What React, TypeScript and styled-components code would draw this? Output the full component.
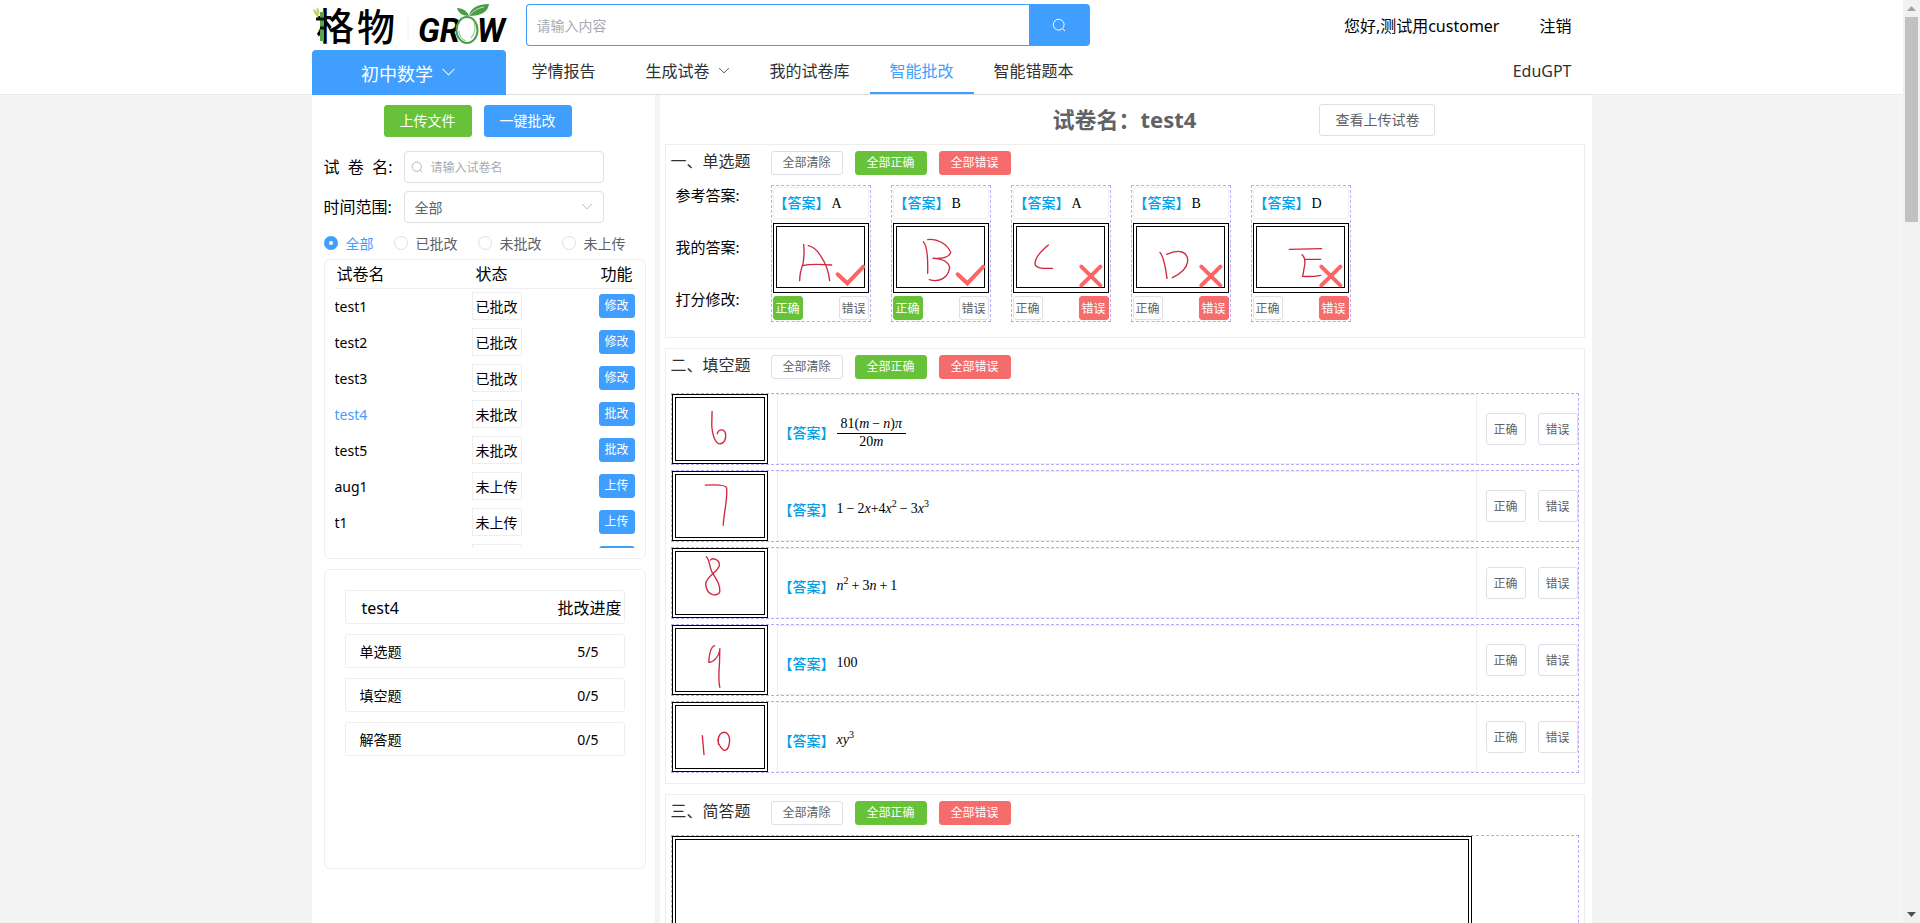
import React from "react";
import styled, { createGlobalStyle, css } from "styled-components";

const blue = "#409eff";
const green = "#67c23a";
const red = "#f56c6c";
const line = "#dcdfe6";
const soft = "#eeeeee";
const textGrey = "#606266";

const GlobalStyle = createGlobalStyle`
  *, *::before, *::after { box-sizing: border-box; }
  html, body { margin: 0; background: #f4f4f4; }
  body, button, input, select {
    font-family: "Noto Sans", "Noto Sans CJK SC", sans-serif;
  }
  body { font-size: 14px; line-height: 20px; color: #000; overflow: hidden; }
  button { cursor: pointer; }
`;

/* ---------- page frame ---------- */
const Screen = styled.div`
  display: flex;
  height: 100vh;
  overflow: hidden;
`;
const Page = styled.div`
  flex: 1;
  min-width: 0;
  height: 100%;
  overflow: hidden;
  display: flex;
  flex-direction: column;
`;
const Rail = styled.div`
  width: 17px;
  background: #f1f1f1;
  display: flex;
  flex-direction: column;
  align-items: center;
`;
const RailArrow = styled.svg`
  width: 17px;
  height: 17px;
  flex: none;
`;
const Thumb = styled.div`
  width: 13px;
  height: 205px;
  background: #c1c1c1;
  margin-bottom: auto;
`;
const Container = styled.div`
  width: 100%;
  max-width: 1280px;
  margin: 0 auto;
`;

/* ---------- header ---------- */
const Header = styled.header`
  flex: none;
  background: #fff;
  border-bottom: 1px solid #ebebeb;
`;
const TopRow = styled(Container)`
  display: flex;
  height: 50px;
  padding: 4px 20px 4px 0;
`;
const Logo = styled.svg`
  width: 194px;
  height: 42px;
  margin-right: 20px;
  flex: none;
  overflow: visible;
`;
const SearchForm = styled.form`
  display: flex;
  width: 564px;
  height: 42px;
`;
const SearchInput = styled.input`
  flex: 1;
  min-width: 0;
  border: 1px solid ${blue};
  border-right: 0;
  border-radius: 4px 0 0 4px;
  padding: 0 10px;
  font-size: 14px;
  outline: none;
  &::placeholder { color: #a8abb2; }
`;
const SearchButton = styled.button`
  width: 61px;
  border: 0;
  border-radius: 0 4px 4px 0;
  background: ${blue};
  color: #fff;
  display: flex;
  align-items: center;
  justify-content: center;
`;
const Account = styled.div`
  margin-left: auto;
  display: flex;
  gap: 40px;
  font-size: 16px;
  line-height: 44px;
`;
const PlainLink = styled.a`
  color: inherit;
  text-decoration: none;
`;
const NavRow = styled(Container)`
  display: flex;
  height: 45px;
  margin-bottom: -1px;
  border-bottom: 1px solid ${line};
`;
const Subject = styled.button`
  width: 194px;
  height: 45px;
  border: 0;
  border-radius: 4px 4px 0 0;
  background: ${blue};
  color: #fff;
  font-size: 18px;
  display: flex;
  align-items: center;
  justify-content: center;
  gap: 8px;
`;
const Nav = styled.nav`
  flex: 1;
  display: flex;
  padding: 0 20px 0 6px;
  font-size: 16px;
  line-height: 42px;
  color: #303133;
`;
const NavLink = styled.a<{ $active?: boolean; $wide?: boolean }>`
  display: flex;
  align-items: center;
  gap: 8px;
  height: 44px;
  padding: 0 20px;
  margin-right: ${(p) => (p.$wide ? "10px" : "0")};
  color: ${(p) => (p.$active ? blue : "inherit")};
  border-bottom: 2px solid ${(p) => (p.$active ? blue : "transparent")};
  text-decoration: none;
`;
const NavEnd = styled(PlainLink)`
  margin-left: auto;
`;

/* ---------- columns ---------- */
const Columns = styled(Container)`
  flex: 1;
  min-height: 0;
  display: flex;
  gap: 5px;
`;
const Side = styled.aside`
  width: 343px;
  flex: none;
  background: #fff;
  padding: 10px 9px 0 12px;
`;
const Main = styled.main`
  flex: 1;
  min-width: 0;
  background: #fff;
  padding: 0 7px 0 5px;
`;

/* ---------- controls ---------- */
type Tone = "plain" | "green" | "blue" | "red";
const tones = {
  plain: css`background: #fff; color: ${textGrey}; border-color: ${line};`,
  green: css`background: ${green}; color: #fff; border-color: ${green};`,
  blue: css`background: ${blue}; color: #fff; border-color: ${blue};`,
  red: css`background: ${red}; color: #fff; border-color: ${red};`,
};
const Button = styled.button<{ $tone?: Tone; $small?: boolean; $w: number }>`
  width: ${(p) => p.$w}px;
  height: ${(p) => (p.$small ? 24 : 32)}px;
  padding: 0;
  border: 1px solid;
  border-radius: 3px;
  font-size: ${(p) => (p.$small ? 12 : 14)}px;
  line-height: 20px;
  white-space: nowrap;
  ${(p) => tones[p.$tone ?? "plain"]}
`;
const MarkButton = styled(Button)`
  font-size: 12px;
  padding-top: 2px;
`;
const Actions = styled.div`
  display: flex;
  justify-content: center;
  gap: 12px;
  margin: 0 14px 14px 0;
`;
const Field = styled.div`
  display: flex;
  align-items: center;
  height: 32px;
  margin-bottom: 8px;
`;
const FieldLabel = styled.label`
  width: 80px;
  font-size: 16px;
  white-space: pre;
`;
const InputBox = styled.div`
  width: 200px;
  height: 32px;
  border: 1px solid ${line};
  border-radius: 4px;
  display: flex;
  align-items: center;
  padding: 0 10px 0 6px;
  gap: 8px;
  color: #a8abb2;
`;
const BareInput = styled.input`
  flex: 1;
  min-width: 0;
  border: 0;
  padding: 0;
  outline: none;
  font-size: 12px;
  &::placeholder { color: #a8abb2; }
`;
const BareSelect = styled.select`
  flex: 1;
  appearance: none;
  border: 0;
  background: none;
  padding: 0 0 0 4px;
  font-size: 14px;
  color: ${textGrey};
  outline: none;
`;
const Radios = styled.div`
  display: flex;
  gap: 20px;
  height: 24px;
  margin-bottom: 4px;
`;
const RadioLabel = styled.label`
  display: flex;
  align-items: center;
  gap: 8px;
  color: ${textGrey};
  &:has(input:checked) { color: ${blue}; }
`;
const RadioText = styled.span`
  padding-top: 2px;
`;
const Radio = styled.input`
  appearance: none;
  width: 14px;
  height: 14px;
  margin: 0;
  border: 1px solid ${line};
  border-radius: 50%;
  &:checked { border: 5px solid ${blue}; }
`;

/* ---------- paper list ---------- */
const Panel = styled.section`
  width: 322px;
  height: 300px;
  border: 1px solid ${soft};
  border-radius: 6px;
  margin-bottom: 10px;
`;
const ListPanel = styled(Panel)`
  padding: 0 10px 10px;
`;
const ListClip = styled.div`
  height: 288px;
  overflow: hidden;
`;
const PaperTable = styled.table`
  width: 100%;
  table-layout: fixed;
  border-collapse: collapse;
  td, th { padding: 0; }
  th {
    height: 28px;
    font-weight: 400;
    font-size: 16px;
    text-align: left;
    border-bottom: 1px solid ${soft};
    padding: 0 2px;
  }
  th:nth-child(1) { width: 137px; }
  th:nth-child(2) { width: 60px; padding-left: 4px; }
  th:last-child, td:last-child { text-align: right; }
  td { height: 36px; }
`;
const PaperName = styled.td<{ $active: boolean }>`
  && { padding-top: 2px; }
  color: ${(p) => (p.$active ? blue : "inherit")};
`;
const Status = styled.div`
  width: 50px;
  height: 28px;
  border: 1px solid ${soft};
  text-align: center;
  line-height: 28px;
`;

/* ---------- progress ---------- */
const ProgressPanel = styled(Panel)`
  padding: 20px;
  display: flex;
  flex-direction: column;
  gap: 10px;
`;
const ProgressRow = styled.div<{ $head?: boolean }>`
  height: 34px;
  border: 1px solid ${soft};
  border-radius: 3px;
  display: flex;
  align-items: center;
  justify-content: space-between;
  padding: ${(p) => (p.$head ? "2px 2px 0 16px" : "2px 25px 0 14px")};
  font-size: ${(p) => (p.$head ? 16 : 14)}px;
`;

/* ---------- grading ---------- */
const TitleBar = styled.div`
  display: grid;
  grid-template-columns: 1fr auto 1fr;
  align-items: center;
  height: 49px;
  padding-top: 1px;
`;
const Title = styled.h1`
  grid-column: 2;
  margin: 0;
  font-size: 22px;
  line-height: 30px;
  padding-bottom: 2px;
  font-weight: 700;
  color: ${textGrey};
`;
const TitleAction = styled.div`
  padding-left: 123px;
`;
const Section = styled.section<{ $pad?: number }>`
  border: 1px solid ${soft};
  padding: 0 5px ${(p) => p.$pad ?? 10}px;
  margin-bottom: 10px;
`;
const SectionHead = styled.div<{ $h: number }>`
  display: flex;
  align-items: flex-start;
  gap: 12px;
  height: ${(p) => p.$h}px;
  padding-top: 6px;
`;
const SectionTitle = styled.h2`
  width: 88px;
  margin: 0;
  font-size: 16px;
  line-height: 20px;
  font-weight: 400;
  color: #303133;
  white-space: nowrap;
`;
const ChoiceGrid = styled.div`
  display: flex;
`;
const ChoiceLabels = styled.div`
  width: 100px;
  padding-left: 5px;
  font-size: 15px;
  line-height: 20px;
  display: flex;
  flex-direction: column;
  gap: 32px;
`;
const Cards = styled.div`
  display: flex;
  gap: 20px;
`;
const Card = styled.div`
  width: 100px;
  height: 137px;
  border: 1px dashed #bba8fb;
  padding: 1px;
  display: flex;
  flex-direction: column;
`;
const CardAnswer = styled.div`
  height: 32px;
  border: 1px solid ${soft};
  border-radius: 4px;
  margin-bottom: 4px;
  line-height: 28px;
  white-space: nowrap;
`;
const CardButtons = styled.div`
  display: flex;
  justify-content: space-between;
  margin-top: 3px;
`;
const Tag = styled.span`
  color: #00a0e9;
  font-weight: 500;
  margin-right: 2px;
  font-family: "Noto Sans CJK SC", sans-serif;
`;
const Formula = styled.span`
  font-family: "Liberation Serif", serif;
  font-size: 14px;
  white-space: nowrap;
  sup {
    font-size: 10px;
    line-height: 0;
    vertical-align: 6px;
  }
`;
const Op = styled.span`
  margin: 0 3px;
`;
const Fraction = styled.span`
  display: inline-flex;
  flex-direction: column;
  align-items: center;
  line-height: 16px;
`;
const Numerator = styled.span`
  border-bottom: 1px solid #000;
  padding: 0 4px 1px;
`;
const Ink = styled.div<{ $choice?: boolean; $w?: number; $h?: number }>`
  width: ${(p) => p.$w ?? 96}px;
  height: ${(p) => p.$h ?? 70}px;
  flex: none;
  border: 1px solid #000;
  padding: ${(p) => (p.$choice ? "2px 3px 4px 2px" : "2px")};
`;
const InkInner = styled.div`
  height: 100%;
  border: 1px solid #000;
`;
const Drawing = styled.svg`
  display: block;
  width: 100%;
  height: 100%;
  overflow: visible;
`;
const Blank = styled.div`
  height: 72px;
  border: 1px dashed #bba8fb;
  margin-bottom: 5px;
  display: flex;
  align-items: center;
  gap: 9px;
  &:last-child { margin-bottom: 0; }
`;
const BlankAnswer = styled.div`
  flex: 1;
  height: 70px;
  border: 1px solid ${soft};
  padding: 6px 0 0 1px;
  display: flex;
  align-items: center;
`;
const BlankButtons = styled.div`
  display: flex;
  gap: 12px;
`;
const LongAnswer = styled.div`
  border: 1px dashed #bba8fb;
`;

const Chevron = ({ w, color }: { w: number; color: string }) => (
  <svg width={w} height={w} viewBox="0 0 16 16" fill="none" stroke={color} strokeWidth="1.1" aria-hidden="true">
    <path d="M1.5 4 8 10.500l6.5-6.5" />
  </svg>
);
const Magnifier = ({ size }: { size: number }) => (
  <svg width={size} height={size} viewBox="0 0 14 14" fill="none" stroke="currentColor" strokeWidth="1" aria-hidden="true">
    <circle cx="6.7" cy="6.7" r="5.4" />
    <path d="M10.8 10.8 13 13" />
  </svg>
);

const Brand = () => (
  <Logo viewBox="0 0 194 42" role="img" aria-label="格物 GROW">
    <text x="4" y="36" fontSize="38" fontWeight="500" fontFamily="Noto Sans CJK SC, sans-serif">格</text>
    <text x="45" y="37" fontSize="38" fontWeight="500" fontFamily="Noto Sans CJK SC, sans-serif">物</text>
    <path d="M8 8h4v29H8z" fill="#57a44b" />
    <path d="M4 15h11M8 24h5" stroke="#111" strokeWidth="3" />
    <path d="M1 5c3 1 5 4 6 8-3-1-5-4-6-8zM7 11c-2-3-3-5-2-8 2 2 3 5 2 8z" fill="#b5cf55" />
    <path d="M96 14v22" stroke="#eeeeee" />
    <g fontFamily="Roboto, sans-serif" fontSize="33" fontWeight="700" fontStyle="italic">
      <text x="106" y="38">GR</text>
      <text x="165" y="38">W</text>
    </g>
    <ellipse cx="155" cy="26" rx="10.500" ry="13" fill="#fff" stroke="#4a9d47" strokeWidth="2" />
    <path d="M147 27c0 5 3 9 7 10M162 18c2 5 1 12-3 16" fill="none" stroke="#9ccf8f" strokeWidth="1.200" />
    <path d="M157 12c1-7 7-12 20-12-1 8-8 12-20 12z" fill="#4a9d47" />
    <path d="M157 12c-1-4-6-8-12-8 1 5 6 8 12 8z" fill="#4a9d47" />
    <path d="M157 12c4-5 9-8 15-9" fill="none" stroke="#c6e3bf" strokeWidth="1" />
  </Logo>
);

const papers = [
  ["test1", "已批改", "修改"],
  ["test2", "已批改", "修改"],
  ["test3", "已批改", "修改"],
  ["test4", "未批改", "批改"],
  ["test5", "未批改", "批改"],
  ["aug1", "未上传", "上传"],
  ["t1", "未上传", "上传"],
  ["t2", "未上传", "上传"],
];

const choices = [
  { answer: "A", right: true, ink: "M80 52Q83 80 78 110Q68 138 68 161M94 56Q114 60 130 85Q154 120 158 161M78 116Q100 109 164 114" },
  { answer: "B", right: true, ink: "M79 44Q94 60 92 139M92 38C120 34 150 50 161 76C156 92 135 96 108 94C140 94 156 108 158 122C154 150 130 168 97 158" },
  { answer: "A", right: false, ink: "M94 54C70 74 54 94 54 110C56 126 80 124 107 124" },
  { answer: "B", right: false, ink: "M69 76Q82 92 90 154M89 82C125 66 154 72 152 104C148 128 128 142 106 152" },
  { answer: "D", right: false, ink: "M97 67L194 65M135 83Q146 92 143 114L137 148Q165 150 191 145M143 97L191 97" },
];

const blanks: { ink: string; answer: React.ReactNode }[] = [
  {
    ink: "M107 40L106 80C108 118 120 136 130 136C144 136 149 120 147 106C144 92 128 90 122 106",
    answer: (
      <Fraction>
        <Numerator>81(<i>m</i><Op>−</Op><i>n</i>)<i>π</i></Numerator>
        <span>20<i>m</i></span>
      </Fraction>
    ),
  },
  {
    ink: "M87 30C120 28 148 28 150 38C154 70 142 110 140 149",
    answer: <>1<Op>−</Op>2<i>x</i>+4<i>x</i><sup>2</sup><Op>−</Op>3<i>x</i><sup>3</sup></>,
  },
  {
    ink: "M90 14C100 22 100 50 108 62C122 84 132 100 130 118C126 132 92 134 88 96C88 72 126 60 129 38C128 22 108 16 102 24",
    answer: <><i>n</i><sup>2</sup><Op>+</Op>3<i>n</i><Op>+</Op>1</>,
  },
  {
    ink: "M114 49C100 54 98 80 97 98C110 102 128 78 129 66M130 58L129 100C126 140 126 160 130 173",
    answer: <>100</>,
  },
  {
    ink: "M78 88L83 144M126 114C124 98 128 84 136 80C152 72 162 90 158 112C154 132 146 134 140 130C130 122 124 108 124 100",
    answer: <><i>xy</i><sup>3</sup></>,
  },
];

const Handwriting = ({ d, mark }: { d: string; mark?: "check" | "cross" }) => (
  <Drawing viewBox="0 0 261 180" preserveAspectRatio="xMinYMin" fill="none" strokeLinecap="round" strokeLinejoin="round" aria-hidden="true">
    <path d={d} stroke="#d0263f" strokeWidth="4" />
    {mark === "check" && <path d="M182 142 211 169 259 119" stroke="#ff6464" strokeWidth="12" strokeLinejoin="miter" />}
    {mark === "cross" && <path d="M193 119 250 175M250 119 193 175" stroke="#ff6464" strokeWidth="12" />}
  </Drawing>
);

const Head = ({ title, h }: { title: string; h: number }) => (
  <SectionHead $h={h}>
    <SectionTitle>{title}</SectionTitle>
    <Button $small $w={72}>全部清除</Button>
    <Button $small $w={72} $tone="green">全部正确</Button>
    <Button $small $w={72} $tone="red">全部错误</Button>
  </SectionHead>
);

export default function App() {
  return (
    <Screen>
      <GlobalStyle />
      <Page>
        <Header>
          <TopRow>
            <Brand />
            <SearchForm onSubmit={(e) => e.preventDefault()}>
              <SearchInput aria-label="搜索" placeholder="请输入内容" />
              <SearchButton aria-label="搜索"><Magnifier size={14} /></SearchButton>
            </SearchForm>
            <Account>
              <span>您好,测试用customer</span>
              <PlainLink href="#logout">注销</PlainLink>
            </Account>
          </TopRow>
          <NavRow>
            <Subject>初中数学<Chevron w={15} color="#fff" /></Subject>
            <Nav>
              <NavLink href="#report" $wide>学情报告</NavLink>
              <NavLink href="#create">生成试卷<Chevron w={12} color="#303133" /></NavLink>
              <NavLink href="#library">我的试卷库</NavLink>
              <NavLink href="#grading" $active>智能批改</NavLink>
              <NavLink href="#mistakes">智能错题本</NavLink>
              <NavEnd href="#edugpt">EduGPT</NavEnd>
            </Nav>
          </NavRow>
        </Header>

        <Columns>
          <Side>
            <Actions>
              <Button $w={88} $tone="green">上传文件</Button>
              <Button $w={88} $tone="blue">一键批改</Button>
            </Actions>
            <Field>
              <FieldLabel htmlFor="paper">{"试  卷  名:"}</FieldLabel>
              <InputBox>
                <Magnifier size={12} />
                <BareInput id="paper" placeholder="请输入试卷名" />
              </InputBox>
            </Field>
            <Field>
              <FieldLabel htmlFor="range">时间范围:</FieldLabel>
              <InputBox>
                <BareSelect id="range"><option>全部</option></BareSelect>
                <Chevron w={12} color="#a8abb2" />
              </InputBox>
            </Field>
            <Radios>
              {["全部", "已批改", "未批改", "未上传"].map((t, i) => (
                <RadioLabel key={t}>
                  <Radio type="radio" name="state" defaultChecked={i === 0} />
                  <RadioText>{t}</RadioText>
                </RadioLabel>
              ))}
            </Radios>
            <ListPanel>
              <ListClip>
                <PaperTable>
                  <thead>
                    <tr><th>试卷名</th><th>状态</th><th>功能</th></tr>
                  </thead>
                  <tbody>
                    {papers.map(([name, status, action]) => (
                      <tr key={name}>
                        <PaperName $active={name === "test4"}>{name}</PaperName>
                        <td><Status>{status}</Status></td>
                        <td><Button $small $w={36} $tone="blue">{action}</Button></td>
                      </tr>
                    ))}
                  </tbody>
                </PaperTable>
              </ListClip>
            </ListPanel>
            <ProgressPanel>
              <ProgressRow $head><span>test4</span><span>批改进度</span></ProgressRow>
              <ProgressRow><span>单选题</span><span>5/5</span></ProgressRow>
              <ProgressRow><span>填空题</span><span>0/5</span></ProgressRow>
              <ProgressRow><span>解答题</span><span>0/5</span></ProgressRow>
            </ProgressPanel>
          </Side>

          <Main>
            <TitleBar>
              <Title>试卷名：test4</Title>
              <TitleAction><Button $w={116}>查看上传试卷</Button></TitleAction>
            </TitleBar>

            <Section $pad={15}>
              <Head title="一、单选题" h={40} />
              <ChoiceGrid>
                <ChoiceLabels>
                  <span>参考答案:</span>
                  <span>我的答案:</span>
                  <span>打分修改:</span>
                </ChoiceLabels>
                <Cards>
                  {choices.map((c, i) => (
                    <Card key={i}>
                      <CardAnswer><Tag>【答案】</Tag><Formula>{c.answer}</Formula></CardAnswer>
                      <Ink $choice>
                        <InkInner><Handwriting d={c.ink} mark={c.right ? "check" : "cross"} /></InkInner>
                      </Ink>
                      <CardButtons>
                        <MarkButton $small $w={30} $tone={c.right ? "green" : "plain"}>正确</MarkButton>
                        <MarkButton $small $w={30} $tone={c.right ? "plain" : "red"}>错误</MarkButton>
                      </CardButtons>
                    </Card>
                  ))}
                </Cards>
              </ChoiceGrid>
            </Section>

            <Section>
              <Head title="二、填空题" h={44} />
              <div>
                {blanks.map((b, i) => (
                  <Blank key={i}>
                    <Ink><InkInner><Handwriting d={b.ink} /></InkInner></Ink>
                    <BlankAnswer><Tag>【答案】</Tag><Formula>{b.answer}</Formula></BlankAnswer>
                    <BlankButtons>
                      <MarkButton $w={40}>正确</MarkButton>
                      <MarkButton $w={40}>错误</MarkButton>
                    </BlankButtons>
                  </Blank>
                ))}
              </div>
            </Section>

            <Section>
              <Head title="三、简答题" h={40} />
              <LongAnswer>
                <Ink $w={800} $h={400}><InkInner /></Ink>
              </LongAnswer>
            </Section>
          </Main>
        </Columns>
      </Page>
      <Rail aria-hidden="true">
        <RailArrow viewBox="0 0 17 17"><path d="M4 11h9L8.500 6z" fill="#a3a3a3" /></RailArrow>
        <Thumb />
        <RailArrow viewBox="0 0 17 17"><path d="M4 6h9l-4.500 5z" fill="#505050" /></RailArrow>
      </Rail>
    </Screen>
  );
}
